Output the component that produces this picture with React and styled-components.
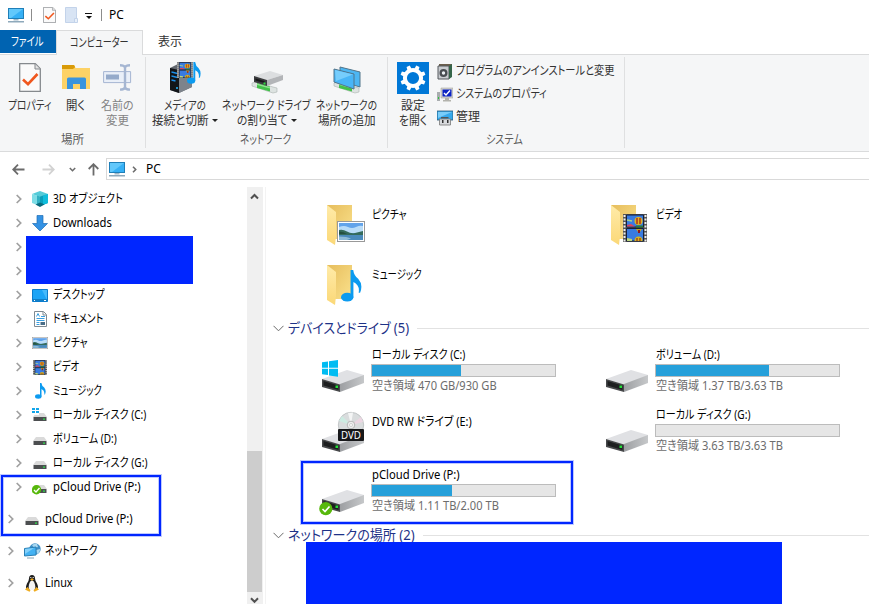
import React, { useLayoutEffect, useRef, useState } from "react";
import styled, { createGlobalStyle, css } from "styled-components";

const BLUE = "#0026ff";

//squeezes a label so it takes exactly the given width
const Fit = ({ w, children, ...rest }) => {
  const ref = useRef(null);
  const [scale, setScale] = useState(1);

  useLayoutEffect(() => {
    setScale(w / ref.current.offsetWidth);
  }, [w, children]);

  return (
    <FitBox $w={w} {...rest}>
      <FitText ref={ref} style={{ transform: `scaleX(${scale})` }}>
        {children}
      </FitText>
    </FitBox>
  );
};

/* ---------- icons ---------- */

const PcIcon = () => (
  <svg width="17" height="16" viewBox="0 0 17 16">
    <rect x="0.5" y="1.5" width="15" height="10" fill="#36b0f5" stroke="#1f7fb8" />
    <path d="M1 2h14L3 11H1z" fill="#62c8fb" />
    <path d="M5.500 12h5v1.500h-5z" fill="#9fb6c6" />
    <path d="M0 14h16v1.500H0z" fill="#8ea9bb" />
  </svg>
);

const CheckDoc = ({ w, h }) => (
  <svg width={w} height={h} viewBox="0 0 22 29" preserveAspectRatio="none">
    <path d="M.7.7h15.6l5 5v22.6H.7z" fill="#fafafa" stroke="#85898d" strokeWidth="1.3" />
    <path d="M16 1v5h5" fill="#e3e3e3" stroke="#85898d" />
    <path d="M4 16.5l5 4.700L18.500 11" fill="none" stroke="#f0571e" strokeWidth="2.600" />
  </svg>
);

const PaleFolder = () => (
  <svg width="14" height="16" viewBox="0 0 14 16">
    <path d="M.5.5h11v15H.5z" fill="#d8e4f4" stroke="#c3d3ea" />
    <path d="M9.5 11.5h3v4h-3z" fill="#e8f0fa" stroke="#c3d3ea" />
  </svg>
);

const OpenFolder = () => (
  <svg width="28" height="25" viewBox="0 0 28 25">
    <path d="M0 0h12l1.500 3H28v21H0z" fill="#f0b92c" />
    <path d="M0 0h12l1 2-2 2H0z" fill="#d99b09" />
    <path d="M0 4h11l2-1h15v21H0z" fill="#fdd266" />
    <path d="M5 24V14q0-1.500 1.500-1.500h16Q24 12.500 24 14v10h-6v-5h-7v5z" fill="#3a94dd" />
  </svg>
);

const RenameIcon = () => (
  <svg width="29" height="27" viewBox="0 0 29 27">
    <path d="M.6 7.600h27v11H.6z" fill="#e9eff8" stroke="#a5b6d2" />
    <path d="M3 10.500h13v5H3z" fill="#95aaca" />
    <path d="M17 1.200q4 0 5 2 1-2 5-2M22 3v21M17 25.600q4 0 5-2 1 2 5 2" fill="none" stroke="#a5b6d2" strokeWidth="2.400" />
  </svg>
);

const Note = ({ w, h }) => (
  <svg width={w} height={h} viewBox="0 0 22 33" preserveAspectRatio="none">
    <ellipse cx="6.500" cy="28" rx="6.500" ry="4.600" fill="#0c9bf0" />
    <path d="M10 0h2.800q.8 6 5.200 9 5.500 6 2 14.500h-1.500Q20 16 13 12.500V28h-3z" fill="#0c9bf0" />
  </svg>
);

const Film = ({ w, h }) => (
  <svg width={w} height={h} viewBox="0 0 24 28" preserveAspectRatio="none">
    <path d="M0 0h24v28H0z" fill="#555" />
    <path d="M1.500 1v27M22.500 1v27" stroke="#eee" strokeWidth="2" strokeDasharray="2 1.500" />
    <path d="M3.500 1h17v12h-17zM3.500 14.500h17V27h-17z" fill="#397be0" />
    <path d="M3.500 1h17v12h-17zM3.500 14.500h17V27h-17z" fill="none" stroke="#172038" />
    <circle cx="15.500" cy="7" r="4" fill="#e0b420" />
    <path d="M14 4v6M17 4v6" stroke="#a51e18" strokeWidth="1.300" fill="none" />
    <path d="M4 11l4-1 4 2.500H4z" fill="#dc445d" />
    <path d="M4 6l5 1" stroke="#a8cf90" strokeWidth="1.500" />
    <path d="M13 11.500h7v2h-7z" fill="#2a7a3a" />
    <path d="M13 15h6l-3 4.500z" fill="#c8a024" />
    <path d="M15 16h2v3h-2z" fill="#8e171b" />
    <path d="M11.500 27q0-4.500 4-4.500t4 4.500z" fill="#d8b620" />
    <path d="M14 24v3M17 24v3" stroke="#7e171b" />
    <path d="M4 24l5 1v2H4z" fill="#bed77d" />
  </svg>
);

const Picture = ({ w, h }) => (
  <svg width={w} height={h} viewBox="0 0 28 21" preserveAspectRatio="none">
    <rect x=".5" y=".5" width="27" height="20" fill="#fff" stroke="#999" />
    <path d="M2 2h24v17H2z" fill="#62a3ea" />
    <path d="M2 6q5-2 9 0t8 0 7-1v7H2z" fill="#b9dcf8" />
    <path d="M2 9q4-1 8 1.500t8 1.500 8-2v4.500H2z" fill="#356b5c" />
    <path d="M2 10.500q5 0 8 2.500H2z" fill="#24503f" />
    <path d="M2 14h24v5H2z" fill="#4a8abb" />
    <path d="M2 15.500q8 0 12 2l-4 1.500H2z" fill="#8fbcd8" />
  </svg>
);

const MediaIcon = () => (
  <svg width="32" height="33" viewBox="0 0 32 33">
    <path d="M1 7l8-4 14 4v19L10 32 1 29z" fill="#62686f" />
    <path d="M1 7l9 2v23l-9-3z" fill="#121519" />
    <path d="M10 9l13-2v19l-13 6z" fill="#7d838b" />
    <path d="M2.500 11l6 1.500M2.500 15l6 1.500M2.500 19l4 1" stroke="#1c8fe8" strokeWidth="1.300" />
    <circle cx="8" cy="27" r="1" fill="#27b7ff" />
    <g transform="translate(8 1)">
      <Film w="16" h="16" />
    </g>
    <g transform="translate(18 1)">
      <Note w="14" h="22" />
    </g>
  </svg>
);

const PlugBase = () => (
  <g>
    <path d="M1 1l4-1 17 5 4 1v4l-4 1L1 4z" fill="#dde3e1" stroke="#a9b1ae" strokeWidth=".6" />
    <path d="M6 1l13 3.500v5L6 6z" fill="#43c14a" />
    <path d="M6 1.500l13 3.500v1.500L6 3z" fill="#8ce58c" />
  </g>
);

const NetDriveIcon = () => (
  <svg width="32" height="33" viewBox="0 0 32 33">
    <g transform="translate(0 21)">
      <PlugBase />
    </g>
    <path d="M3 15l16-5 13 4-16 5z" fill="#dcdee0" />
    <path d="M3 15l13 4v6L3 21z" fill="#3a3c3e" />
    <path d="M16 19l16-5v5l-16 6z" fill="#b3b5b8" />
    <path d="M4.500 17.500l9 2.500v2l-9-2.500z" fill="#17191a" />
    <path d="M12.500 21.500h2v2h-2z" fill="#2bdf3c" />
  </svg>
);

const NetPlaceIcon = () => (
  <svg width="32" height="33" viewBox="0 0 32 33">
    <g transform="translate(2 21)">
      <PlugBase />
    </g>
    <path d="M9 6l20 5v15L9 20z" fill="#4cb6f3" stroke="#50748a" />
    <path d="M3 8l20 5v15L3 21z" fill="#48b5f7" stroke="#50748a" />
    <path d="M4 9l18 4.500L5 20z" fill="#76cdfc" />
  </svg>
);

const GearIcon = () => (
  <svg width="32" height="32" viewBox="0 0 32 32">
    <path d="M0 0h32v32H0z" fill="#0078d7" />
    <circle cx="16" cy="16" r="8.100" fill="none" stroke="#fff" strokeWidth="4" />
    <g fill="#fff">
      {[22.5, 67.5, 112.5, 157.5, 202.5, 247.5, 292.5, 337.5].map((a) => (
        <path key={a} d="M13.700 7.500l.6-4.200h3.400l.6 4.200z" transform={`rotate(${a} 16 16)`} />
      ))}
    </g>
  </svg>
);

const UninstallIcon = () => (
  <svg width="16" height="17" viewBox="0 0 16 17">
    <path d="M2 1h13v13H2z" fill="#6b5e4c" />
    <path d="M1 3h11v13H1z" fill="#c9ccd0" stroke="#55585c" />
    <path d="M12 3l3-2v13l-3 2z" fill="#35654a" />
    <circle cx="6.500" cy="10" r="4" fill="#494d51" />
    <circle cx="6.500" cy="10" r="1.700" fill="#edf2f5" />
  </svg>
);

const SystemIcon = () => (
  <svg width="16" height="16" viewBox="0 0 16 16">
    <path d="M0 5h3v9H0z" fill="#a9adb0" />
    <path d="M1 10h1v2H1z" fill="#2dc93b" />
    <path d="M4 1h12v10H4z" fill="#d4d4ce" stroke="#9b9b96" strokeWidth=".5" />
    <path d="M5.500 2.500h9v7h-9z" fill="#0a22c4" />
    <path d="M7 6l2 2 4-4.500" fill="none" stroke="#fff" strokeWidth="1.400" />
    <path d="M8 11h4v2h2v1.500H6V13h2z" fill="#b3b3ad" />
  </svg>
);

const ManageIcon = () => (
  <svg width="16" height="16" viewBox="0 0 16 16">
    <path d="M0 1h16v9H0z" fill="#36a9ec" stroke="#2a5876" strokeWidth=".8" />
    <path d="M1 2h14L1 8z" fill="#79cdf9" />
    <path d="M4 8.500h7.500V7H4z" fill="#555" />
    <path d="M2.500 9h11v6h-11z" fill="#d8dadd" stroke="#777" strokeWidth=".8" />
    <path d="M5 10h1.500v3H5zM10 10h1.500v3H10z" fill="#333" />
  </svg>
);

const CubeIcon = () => (
  <svg width="16" height="16" viewBox="0 0 16 16">
    <path d="M0 3l8-3 8 3-8 3z" fill="#55cbd8" />
    <path d="M0 3l8 2.500V15L0 12z" fill="#7edde6" />
    <path d="M5 4.500l3 1V15l-3-1z" fill="#31b0c2" />
    <path d="M8 5.500L16 3v9l-8 3z" fill="#0a9fbb" />
    <path d="M11 4.500L16 3v9l-5 2z" fill="#10bcdb" />
    <path d="M3.500 13.500L8 11.500l4.500 2L8 16z" fill="#0a6b7e" />
  </svg>
);

const DownIcon = () => (
  <svg width="16" height="17" viewBox="0 0 16 17">
    <path d="M5 .5h6v8h4.500L8 16 .5 8.500H5z" fill="#3492e4" stroke="#1f6fb5" strokeWidth=".7" />
  </svg>
);

const DesktopIcon = () => (
  <svg width="16" height="13" viewBox="0 0 16 13">
    <path d="M.5.5h15v12H.5z" fill="#1ca4f6" stroke="#0b7ccd" />
    <path d="M10 1h5v10z" fill="#45b9fb" />
    <path d="M1 11h14" stroke="#075a99" />
    <path d="M2 11.500h1M12 11.500h2" stroke="#fff" />
  </svg>
);

const DocIcon = () => (
  <svg width="13" height="16" viewBox="0 0 13 16">
    <path d="M.5.5h9l3 3v12H.5z" fill="#fff" stroke="#7f8a92" />
    <path d="M9 1v3h3" fill="none" stroke="#7f8a92" />
    <path d="M2.500 5.500l1.500-3 1.500 3M7 5.500h4M2.500 7.500h8M2.500 9.500h8M2.500 11.500h3M2.500 13.500h3" fill="none" stroke="#3a9fe0" />
    <path d="M6.500 11h4.500v3H6.500z" fill="#4a6d87" />
  </svg>
);

const WinLogo = () => (
  <path d="M0 2.200l6-.8v6.300H0zM7 1.200L16 0v7.700H7zM0 8.800h6v6.300l-6-.8zM7 8.800h9v7.900l-9-1.300z" fill="#00bcf2" />
);

const MiniDrive = ({ kind }) => (
  <svg width="16" height="16" viewBox="0 0 16 16">
    <path d="M4 6h8l3 4H1z" fill="#dadada" />
    <path d="M1.500 10h13v4h-13z" fill="#4c4e50" />
    <path d="M11 11.500h2v1.300h-2z" fill="#2be04a" />
    {kind === "win" && (
      <g fill="#12a5ea" shapeRendering="crispEdges">
        <path d="M0 0h7v8H0z" fill="#fff" />
        <path d="M0 1h3v2H0zM4 1h3v2H4zM0 4h3v2H0zM4 4h3v2H4z" />
      </g>
    )}
    {kind === "ok" && (
      <g>
        <circle cx="4.500" cy="10.800" r="4.700" fill="#57b80b" />
        <path d="M2 11l2 2 3.500-4" fill="none" stroke="#fff" strokeWidth="1.400" />
      </g>
    )}
  </svg>
);

const NetworkIcon = () => (
  <svg width="17" height="16" viewBox="0 0 17 16">
    <circle cx="11" cy="6" r="5.700" fill="#3f8fc6" />
    <path d="M8 2q3-2 5-1l1 3-4 1zM12 7l4-1q0 4-3 5z" fill="#a8d6ef" />
    <path d="M.5 5.500L12 4v8L.5 13z" fill="#43b2f3" stroke="#2a7fb3" />
    <path d="M1 6l9-1-9 6z" fill="#83d0fa" />
    <path d="M3 15h7" stroke="#86a4b5" />
  </svg>
);

const TuxIcon = () => (
  <svg width="14" height="17" viewBox="0 0 14 17">
    <path d="M7 0q3 0 3 3.500 0 2 2 5 2 4 0 6H2q-2-2 0-6 2-3 2-5Q4 0 7 0z" fill="#1d1d1d" />
    <path d="M7 5.500q2 0 3 4t-1 5.500H5Q3 13.500 4 9.500t3-4z" fill="#f4f4f4" />
    <path d="M5 4.200l2-1 2 1-2 1.600z" fill="#f0a91a" />
    <path d="M5.300 2.500h1M7.700 2.500h1" stroke="#fff" />
    <path d="M0 14.500l2.500-2.500 3 3.500-1 1.300zM14 14.500L11.500 12l-3 3.500 1 1.300z" fill="#efad22" />
  </svg>
);

const BigFolder = ({ children }) => (
  <svg width="42" height="42" viewBox="0 0 42 42">
    <defs>
      <linearGradient id="fback" x1="0" y1="0" x2="1" y2="1">
        <stop offset="0" stopColor="#e6bd5c" />
        <stop offset="1" stopColor="#fbe28d" />
      </linearGradient>
      <linearGradient id="ffront" x1="0" y1="0" x2="0" y2="1">
        <stop offset="0" stopColor="#ffeba9" />
        <stop offset="1" stopColor="#fbd877" />
      </linearGradient>
    </defs>
    <path d="M0 0h25v34H7z" fill="url(#fback)" />
    <path d="M0 0l9 7v24l-1 9-8-5z" fill="url(#ffront)" />
    {children}
  </svg>
);

const BigDrive = ({ kind }) => (
  <svg width="42" height="44" viewBox="0 0 42 44" overflow="visible">
    <defs>
      <linearGradient id="dside" x1="0" y1="0" x2="1" y2="0">
        <stop offset="0" stopColor="#9d9fa2" />
        <stop offset="1" stopColor="#c6c8ca" />
      </linearGradient>
    </defs>
    <path d="M0 28l25-9 17 5v1L18 34z" fill="#e0e1e4" />
    <path d="M18 33l24-9v8l-24 9z" fill="url(#dside)" />
    <path d="M0 28l18 5.500V41L0 36z" fill="#47484a" />
    <path d="M1.500 30l15 4.500v4.500l-15-4.500z" fill="#1d1e1f" />
    <path d="M13.500 34.500h2.500v2.500h-2.500z" fill="#25dc3a" />
    {kind === "win" && (
      <g transform="translate(0 9)">
        <WinLogo />
      </g>
    )}
    {kind === "dvd" && (
      <g>
        <circle cx="29" cy="14" r="12.700" fill="#d9dcdd" stroke="#b9bcbe" strokeWidth=".8" />
        <path d="M29 14L17 10l3-5z" fill="#cdebe2" />
        <path d="M29 14L39 6l2 5z" fill="#ecd6e2" />
        <path d="M29 14L26 2l5-.5z" fill="#f4f5f5" />
        <circle cx="29" cy="14" r="3.800" fill="#eee" stroke="#aaa" strokeWidth=".8" />
        <circle cx="29" cy="14" r="1.500" fill="#fff" stroke="#aaa" strokeWidth=".5" />
        <rect x="16" y="18" width="26" height="12" rx="1" fill="#17181a" />
        <text x="19" y="27.800" textLength="20" lengthAdjust="spacingAndGlyphs" fontFamily="Noto Sans" fontSize="10.500" fill="#fff">
          DVD
        </text>
      </g>
    )}
    {kind === "ok" && (
      <g>
        <circle cx="3.800" cy="37.700" r="6.600" fill="#57b80b" />
        <path d="M.5 38l2.500 2.500 4.500-5" fill="none" stroke="#fff" strokeWidth="1.600" />
      </g>
    )}
  </svg>
);

const Chevron = () => (
  <svg width="6" height="10" viewBox="0 0 6 10">
    <path d="M.7 1l4 4-4 4" fill="none" stroke="#a0a0a0" strokeWidth="1.700" />
  </svg>
);

const SectionChevron = () => (
  <svg width="11" height="7" viewBox="0 0 11 7">
    <path d="M.5.8l5 5 5-5" fill="none" stroke="#6a6a6a" />
  </svg>
);

const ScrollArrow = ({ down }) => (
  <svg width="9" height="7" viewBox="0 0 9 7">
    <path d={down ? "M1 1.200l3.500 3.600L8 1.200" : "M1 5.500L4.500 2 8 5.500"} fill="none" stroke="#505050" strokeWidth="2" />
  </svg>
);

const NavArrow = ({ color, turn = 0 }) => (
  <svg width="13" height="13" viewBox="0 0 13 13">
    <path d="M12.500 6.500H1.500M6 1.700L1.200 6.500 6 11.300" fill="none" stroke={color} strokeWidth="1.800" transform={`rotate(${turn} 6.500 6.500)`} />
  </svg>
);

const SmallChevron = ({ turn = 0 }) => (
  <svg width="7" height="7" viewBox="0 0 7 7">
    <path d="M2 .8l2.700 2.700L2 6.200" fill="none" stroke="#6d6d6d" strokeWidth="1.600" transform={`rotate(${turn} 3.500 3.500)`} />
  </svg>
);

/* ---------- data ---------- */

const tree = [
  { text: "3D オブジェクト", w: 70, icon: <CubeIcon /> },
  { text: "Downloads", w: 59, icon: <DownIcon /> },
  { hidden: true },
  { hidden: true },
  { text: "デスクトップ", w: 52, icon: <DesktopIcon /> },
  { text: "ドキュメント", w: 50, icon: <DocIcon /> },
  { text: "ピクチャ", w: 35, icon: <Picture w="16" h="12" /> },
  { text: "ビデオ", w: 26, icon: <Film w="14" h="15" /> },
  { text: "ミュージック", w: 49, icon: <Note w="11" h="16" /> },
  { text: "ローカル ディスク (C:)", w: 93, icon: <MiniDrive kind="win" /> },
  { text: "ボリューム (D:)", w: 64, icon: <MiniDrive /> },
  { text: "ローカル ディスク (G:)", w: 94, icon: <MiniDrive /> },
];

const drives = [
  { name: "ローカル ディスク (C:)", w: 93, kind: "win", used: 48.6, free: "空き領域 470 GB/930 GB", fw: 125 },
  { name: "ボリューム (D:)", w: 64, used: 62, free: "空き領域 1.37 TB/3.63 TB", fw: 127 },
  { name: "DVD RW ドライブ (E:)", w: 100, kind: "dvd" },
  { name: "ローカル ディスク (G:)", w: 94, used: 0, free: "空き領域 3.63 TB/3.63 TB", fw: 127 },
  { name: "pCloud Drive (P:)", w: 88, kind: "ok", used: 43.7, free: "空き領域 1.11 TB/2.00 TB", fw: 127, marked: true },
];

const TreeItem = ({ item, root }) => (
  <TreeRow $root={root}>
    <Chevron />
    <TreeIcon>{item.icon}</TreeIcon>
    {item.text && <Fit w={item.w}>{item.text}</Fit>}
  </TreeRow>
);

const App = () => {
  return (
    <Window>
      <GlobalStyle />
      <TitleBar>
        <PcIcon />
        <Divider $l={6} $r={11} />
        <CheckDoc w="13" h="16" />
        <QuickFolder>
          <PaleFolder />
        </QuickFolder>
        <QuickMenu>
          <i />
          <b />
        </QuickMenu>
        <Divider $l={9} $r={7} />
        <Fit w={15}>PC</Fit>
      </TitleBar>

      <Tabs>
        <FileTab>
          <Fit w={33}>ファイル</Fit>
        </FileTab>
        <ActiveTab>
          <Fit w={59}>コンピューター</Fit>
        </ActiveTab>
        <Tab>
          <Fit w={24}>表示</Fit>
        </Tab>
      </Tabs>

      <Ribbon>
        <Group $w={146}>
          <Tools $left={4} $gap={2}>
            <Tool $w={52}>
              <ToolIcon>
                <CheckDoc w="22" h="29" />
              </ToolIcon>
              <Fit w={44}>プロパティ</Fit>
            </Tool>
            <Tool $w={35}>
              <ToolIcon>
                <OpenFolder />
              </ToolIcon>
              <Fit w={19}>開く</Fit>
            </Tool>
            <Tool $w={44} $off>
              <ToolIcon>
                <RenameIcon />
              </ToolIcon>
              <Fit w={33}>名前の</Fit>
              <Fit w={23}>変更</Fit>
            </Tool>
          </Tools>
          <GroupName>
            <Fit w={23}>場所</Fit>
          </GroupName>
        </Group>
        <Group $w={242}>
          <Tools $left={5} $gap={2}>
            <Tool $w={67}>
              <ToolIcon>
                <MediaIcon />
              </ToolIcon>
              <Fit w={42}>メディアの</Fit>
              <Line>
                <Fit w={57}>接続と切断</Fit>
                <Caret />
              </Line>
            </Tool>
            <Tool $w={93}>
              <ToolIcon>
                <NetDriveIcon />
              </ToolIcon>
              <Fit w={89}>ネットワーク ドライブ</Fit>
              <Line>
                <Fit w={51}>の割り当て</Fit>
                <Caret />
              </Line>
            </Tool>
            <Tool $w={63}>
              <ToolIcon>
                <NetPlaceIcon />
              </ToolIcon>
              <Fit w={61}>ネットワークの</Fit>
              <Fit w={58}>場所の追加</Fit>
            </Tool>
          </Tools>
          <GroupName $shift={2}>
            <Fit w={51}>ネットワーク</Fit>
          </GroupName>
        </Group>
        <Group $w={237}>
          <Tools $left={5} $gap={4}>
            <Tool $w={40}>
              <ToolIcon>
                <GearIcon />
              </ToolIcon>
              <Fit w={24}>設定</Fit>
              <Fit w={28}>を開く</Fit>
            </Tool>
            <SmallTools>
              <SmallTool>
                <UninstallIcon />
                <Fit w={158}>プログラムのアンインストールと変更</Fit>
              </SmallTool>
              <SmallTool>
                <SystemIcon />
                <Fit w={91}>システムのプロパティ</Fit>
              </SmallTool>
              <SmallTool>
                <ManageIcon />
                <Fit w={24}>管理</Fit>
              </SmallTool>
            </SmallTools>
          </Tools>
          <GroupName $shift={3}>
            <Fit w={37}>システム</Fit>
          </GroupName>
        </Group>
      </Ribbon>

      <NavBar>
        <NavButtons>
          <NavArrow color="#6b6b6b" />
          <NavArrow color="#d2d2d2" turn={180} />
          <SmallChevron turn={90} />
          <NavArrow color="#6b6b6b" turn={90} />
        </NavButtons>
        <Address>
          <PcIcon />
          <SmallChevron />
          <Fit w={15}>PC</Fit>
        </Address>
      </NavBar>

      <Body>
        <Tree>
          {tree.map((item, i) => (
            <TreeItem key={i} item={item} />
          ))}
          <Redacted />
          <MarkedRows>
            <TreeItem item={{ text: "pCloud Drive (P:)", w: 88, icon: <MiniDrive kind="ok" /> }} />
            <TreeItem root item={{ text: "pCloud Drive (P:)", w: 88, icon: <MiniDrive /> }} />
          </MarkedRows>
          <TreeItem root item={{ text: "ネットワーク", w: 52, icon: <NetworkIcon /> }} />
          <TreeItem root item={{ text: "Linux", w: 28, icon: <TuxIcon /> }} />
        </Tree>
        <ScrollBar>
          <ScrollArrow />
          <Thumb />
          <ScrollArrow down />
        </ScrollBar>

        <Content>
          <Items>
            <Item>
              <FolderIcon>
                <BigFolder>
                  <g transform="translate(10 16)">
                    <Picture w="28" h="21" />
                  </g>
                </BigFolder>
              </FolderIcon>
              <FolderName>
                <Fit w={35}>ピクチャ</Fit>
              </FolderName>
            </Item>
            <Item>
              <FolderIcon>
                <BigFolder>
                  <g transform="translate(12 9)">
                    <Film w="24" h="28" />
                  </g>
                </BigFolder>
              </FolderIcon>
              <FolderName>
                <Fit w={26}>ビデオ</Fit>
              </FolderName>
            </Item>
            <Item>
              <FolderIcon>
                <BigFolder>
                  <g transform="translate(14 5)">
                    <Note w="21" h="32" />
                  </g>
                </BigFolder>
              </FolderIcon>
              <FolderName>
                <Fit w={50}>ミュージック</Fit>
              </FolderName>
            </Item>
          </Items>

          <Section>
            <SectionChevron />
            <Fit w={121}>デバイスとドライブ (5)</Fit>
          </Section>
          <Items>
            {drives.map((d) => (
              <Item key={d.name} $marked={d.marked}>
                <DriveIcon>
                  <BigDrive kind={d.kind} />
                </DriveIcon>
                <DriveInfo $single={!d.free}>
                  <Fit w={d.w}>{d.name}</Fit>
                  {d.free && (
                    <>
                      <Bar>
                        <Fill style={{ width: `${d.used}%` }} />
                      </Bar>
                      <Free>
                        <Fit w={d.fw}>{d.free}</Fit>
                      </Free>
                    </>
                  )}
                </DriveInfo>
              </Item>
            ))}
          </Items>

          <Section $top={1}>
            <SectionChevron />
            <Fit w={127}>ネットワークの場所 (2)</Fit>
          </Section>
          <NetworkCover />
        </Content>
      </Body>
    </Window>
  );
};

const GlobalStyle = createGlobalStyle`
  *, *::before, *::after {
    box-sizing: border-box;
  }
  body {
    margin: 0;
    overflow: hidden;
    background: #fff;
  }
  svg {
    display: block;
    flex: none;
  }
`;

const Window = styled.div`
  width: 869px;
  height: 604px;
  overflow: hidden;
  display: flex;
  flex-direction: column;
  background: #fff;
  color: #000;
  font-family: "Noto Sans", "Noto Sans CJK JP", sans-serif;
  font-size: 12px;
  line-height: 16px;
  font-feature-settings: "palt";
`;

const FitBox = styled.span`
  display: block;
  flex: none;
  width: ${(p) => p.$w}px;
  height: 1.34em;
  line-height: 1.34em;
  white-space: nowrap;
`;
const FitText = styled.span`
  display: inline-block;
  vertical-align: top;
  transform-origin: left center;
`;

const TitleBar = styled.div`
  display: flex;
  align-items: center;
  height: 30px;
  padding-left: 8px;
  flex: none;
`;
const Divider = styled.div`
  width: 1px;
  height: 12px;
  background: #8c8c8c;
  margin: 0 ${(p) => p.$r}px 0 ${(p) => p.$l}px;
`;
const QuickFolder = styled.div`
  margin-left: 9px;
`;
const QuickMenu = styled.div`
  display: flex;
  flex-direction: column;
  align-items: center;
  margin: 2px 0 0 6px;

  i {
    width: 7px;
    height: 1px;
    background: #111;
    margin-bottom: 2px;
  }
  b {
    border: 3px solid transparent;
    border-top-color: #111;
    border-bottom: 0;
  }
`;

const Tabs = styled.div`
  display: flex;
  flex: none;
  height: 25px;
  color: #333;
  box-shadow: inset 0 -1px #dadbdc;
`;
const Tab = styled.div`
  padding: 4px 15px 0;
`;
const FileTab = styled.div`
  width: 56px;
  height: 23px;
  padding: 4px 0 0 11px;
  background: #0063b1;
  color: #fff;
`;
const ActiveTab = styled.div`
  width: 87px;
  padding: 4px 0 0 13px;
  background: #f5f6f7;
  border: 1px solid #dadbdc;
  border-bottom: 0;
`;

const Ribbon = styled.div`
  display: flex;
  flex: none;
  height: 97px;
  background: #f5f6f7;
  border-bottom: 1px solid #dadbdc;
  color: #333;
`;
const Group = styled.div`
  width: ${(p) => p.$w}px;
  height: 91px;
  margin-top: 2px;
  border-right: 1px solid #dfe0e1;
  display: flex;
  flex-direction: column;
`;
const Tools = styled.div`
  display: flex;
  height: 77px;
  padding-left: ${(p) => p.$left}px;
  gap: ${(p) => p.$gap}px;
`;
const Tool = styled.div`
  display: flex;
  flex-direction: column;
  align-items: center;
  width: ${(p) => p.$w}px;
  color: ${(p) => (p.$off ? "#838383" : "inherit")};

  ${FitBox}, ${FitText} {
    height: 15px;
    line-height: 15px;
  }
`;
const ToolIcon = styled.div`
  display: flex;
  align-items: center;
  justify-content: center;
  height: 33px;
  margin: 4px 0;
`;
const Line = styled.div`
  display: flex;
  align-items: center;
  gap: 3px;
`;
const Caret = styled.i`
  border: 3px solid transparent;
  border-top-color: #222;
  border-bottom: 0;
`;
const SmallTools = styled.div`
  display: flex;
  flex-direction: column;
  padding-top: 3px;
`;
const SmallTool = styled.div`
  display: flex;
  align-items: center;
  height: 23px;
  gap: 3px;
`;
const GroupName = styled.div`
  display: flex;
  justify-content: center;
  padding-right: ${(p) => p.$shift || 0}px;
  color: #5a5a5a;
`;

const NavBar = styled.div`
  display: flex;
  flex: none;
  height: 35px;
  padding-top: 6px;
`;
const NavButtons = styled.div`
  display: grid;
  grid-template-columns: 30px 27px 18px 19px;
  align-items: center;
  width: 94px;
  height: 22px;
  margin-left: 12px;
`;
const Address = styled.div`
  flex: 1;
  display: flex;
  align-items: center;
  height: 22px;
  border: 1px solid #d9d9d9;
  border-right: 0;
  padding-left: 2px;

  svg + svg {
    margin: 0 8px 0 5px;
  }
`;

const Body = styled.div`
  display: flex;
  flex: 1;
  min-height: 0;
`;
const Tree = styled.div`
  position: relative;
  width: 247px;
`;
const TreeRow = styled.div`
  display: flex;
  align-items: center;
  height: 24px;
  padding-left: ${(p) => (p.$root ? 8 : 16)}px;
  margin-top: ${(p) => (p.$root ? 8 : 0)}px;
`;
const TreeIcon = styled.div`
  display: flex;
  justify-content: center;
  width: 16px;
  margin: 0 5px 0 10px;
`;
//covers the two private folders
const Redacted = styled.div`
  position: absolute;
  left: 26px;
  top: 49px;
  width: 167px;
  height: 48px;
  background: ${BLUE};
`;
const frame = css`
  content: "";
  position: absolute;
  border: 2px solid ${BLUE};
  box-shadow: 0 0 0 1px #0026ff40, inset 0 0 0 1px #0026ff40;
`;
const MarkedRows = styled.div`
  position: relative;

  &::after {
    ${frame}
    left: 1px;
    top: 0;
    width: 160px;
    height: 61px;
  }
`;

const ScrollBar = styled.div`
  display: flex;
  flex-direction: column;
  align-items: center;
  width: 16px;
  background: #f0f0f0;
  padding: 6px 1px 0 0;
`;
const Thumb = styled.div`
  width: 15px;
  height: 141px;
  margin: 251px 0 5px;
  background: #cdcdcd;
  flex: none;
`;

const Content = styled.div`
  flex: 1;
  margin-left: 2px;
  border-left: 1px solid #f3f3f3;
  padding-top: 8px;
`;
const Items = styled.div`
  display: grid;
  grid-template-columns: 284px 284px;
  grid-auto-rows: 60px;
  padding-left: 50px;
  width: 600px;
`;
const Item = styled.div`
  position: relative;
  display: flex;

  ${(p) =>
    p.$marked &&
    css`
      &::after {
        ${frame}
        left: -15px;
        top: 0;
        width: 272px;
        height: 63px;
      }
    `}
`;
const FolderIcon = styled.div`
  width: 56px;
  padding: 10px 0 0 11px;
`;
const FolderName = styled.div`
  padding-top: 12px;
`;
const DriveIcon = styled.div`
  width: 55px;
  padding: 10px 0 0 6px;
`;
const DriveInfo = styled.div`
  padding: ${(p) => (p.$single ? 13 : 6)}px 0 0 0;

  > span {
    margin-left: 1px;
  }
`;
const Bar = styled.div`
  width: 185px;
  height: 13px;
  margin-top: 1px;
  background: #e6e6e6;
  border: 1px solid #bcbcbc;
`;
const Fill = styled.div`
  height: 100%;
  background: #26a0da;
`;
const Free = styled.div`
  margin: 1px 0 0 1px;
  color: #6d6d6d;
`;
const Section = styled.div`
  display: flex;
  align-items: center;
  height: 26px;
  margin-top: ${(p) => p.$top || 0}px;
  padding-left: 7px;
  gap: 4px;
  font-size: 14px;
  color: #1e3287;

  &::after {
    content: "";
    flex: 1;
    height: 1px;
    margin-left: 4px;
    background: #e2e2e2;
  }
`;
const NetworkCover = styled.div`
  position: relative;
  width: 476px;
  height: 62px;
  margin: -6px 0 0 40px;
  background: ${BLUE};
`;

export default App;
